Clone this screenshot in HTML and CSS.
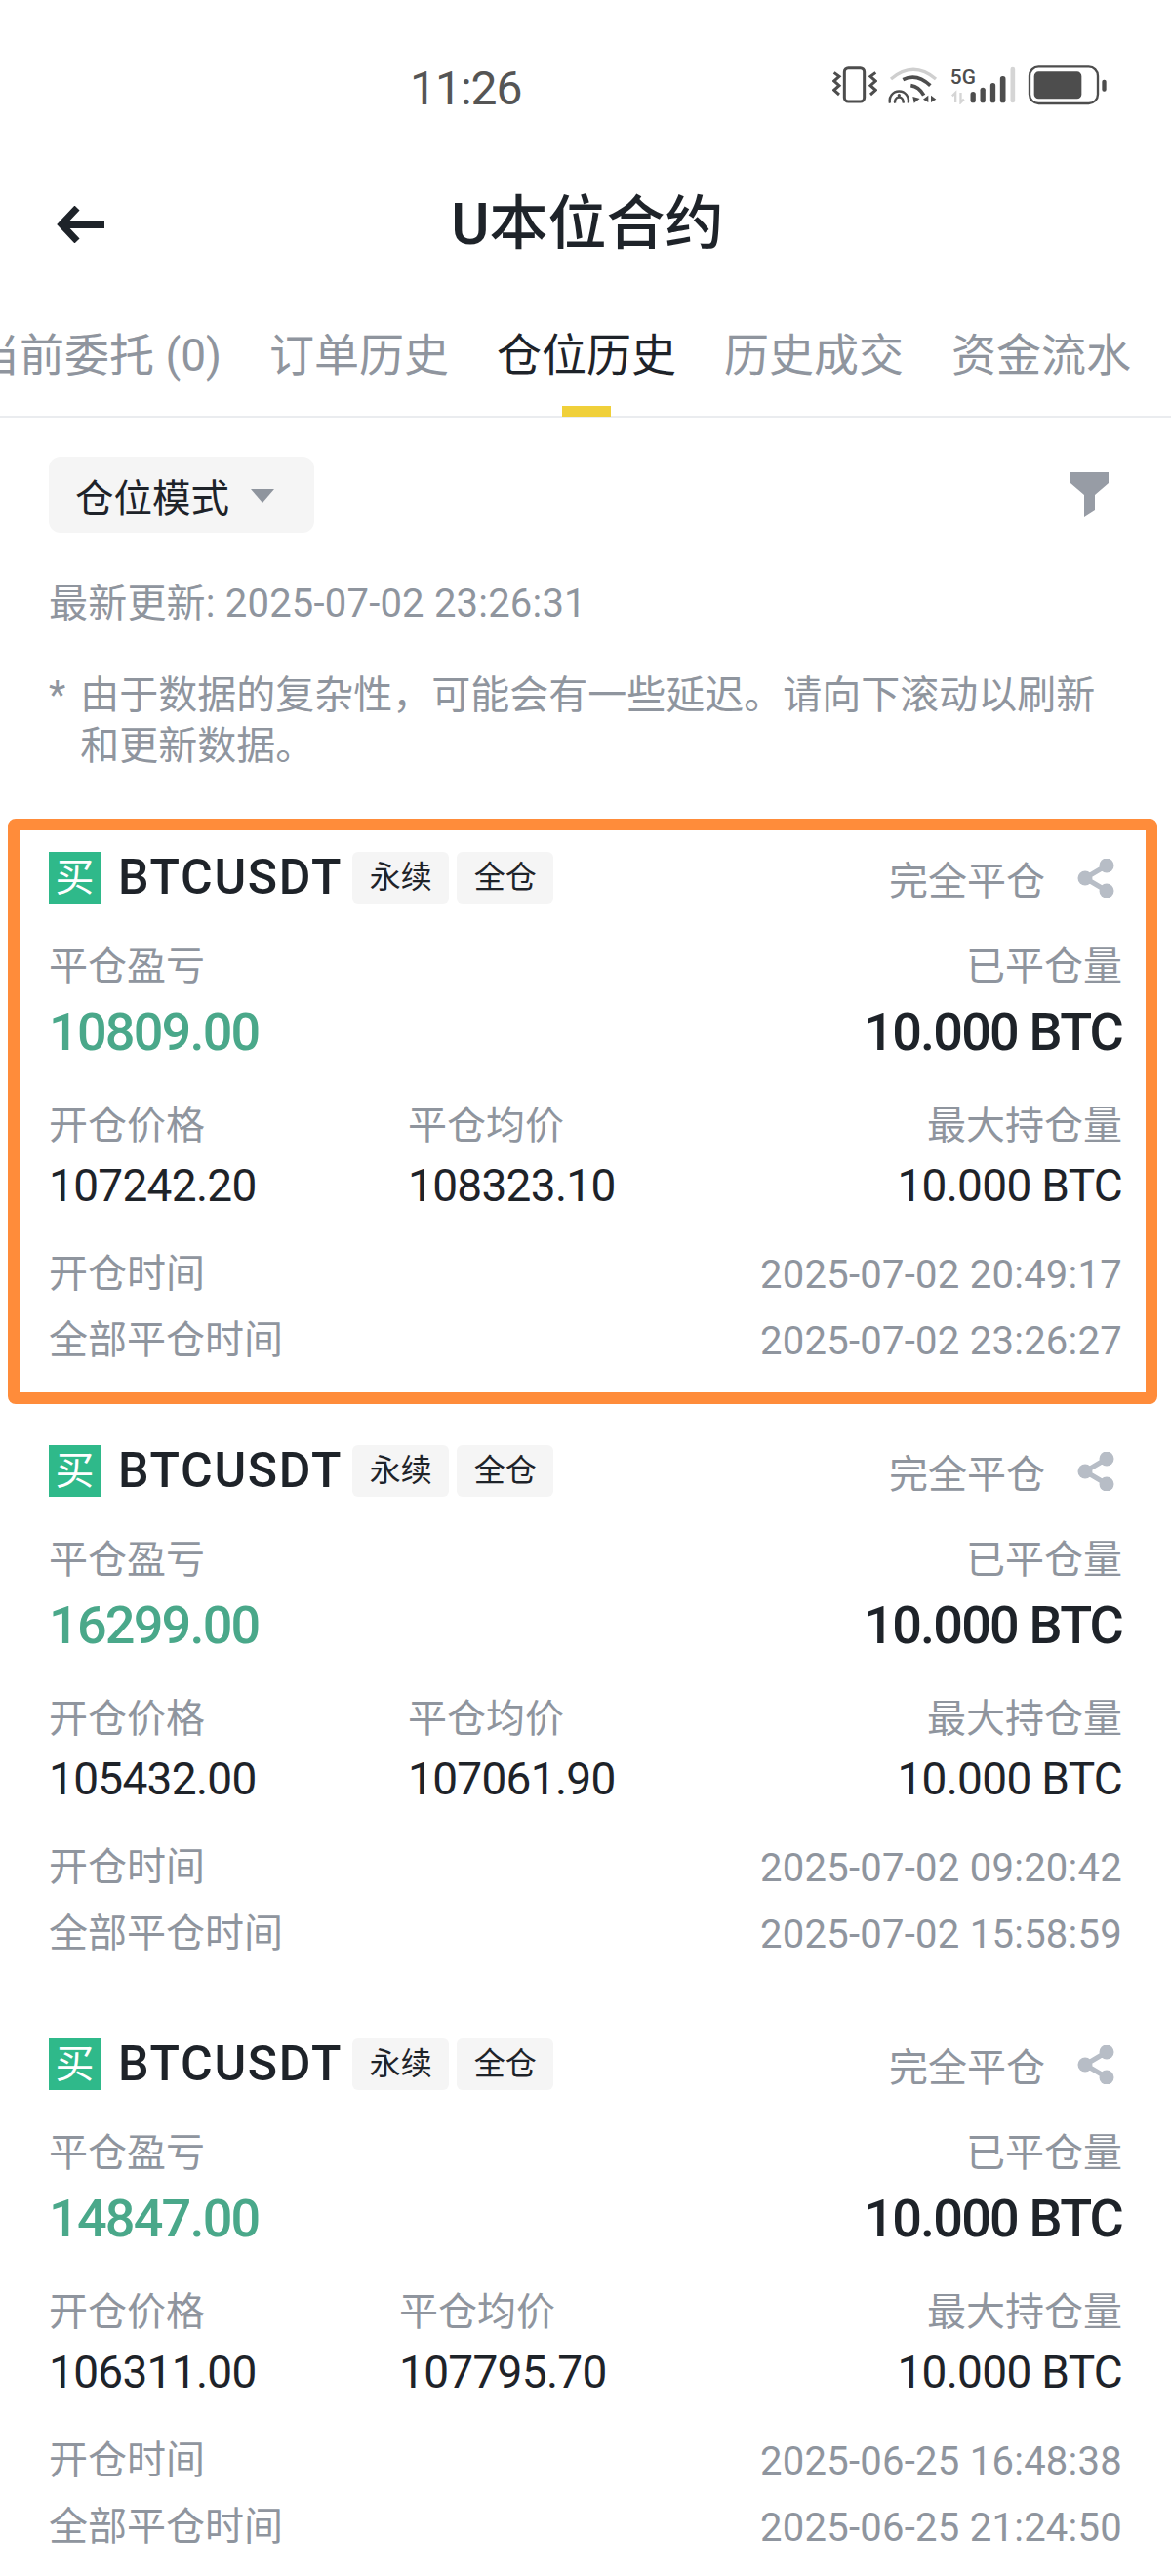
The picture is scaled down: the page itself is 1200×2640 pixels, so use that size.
FILE: index.html
```html
<!DOCTYPE html>
<html lang="zh-CN">
<head>
    <meta charset="UTF-8">
    <meta name="viewport" content="width=device-width, initial-scale=1.0">
    <title>U本位合约</title>
    <link rel="stylesheet" href="styles.css">
</head>
<body>
    <svg class="icon-defs" width="0" height="0">
        <symbol id="share" viewBox="0 0 40 40">
            <path d="M30 7 L8 20 L30 33" fill="none" stroke="#b7bdc6" stroke-width="5"/>
            <circle cx="30" cy="7" r="7.5" fill="#b7bdc6"/>
            <circle cx="8" cy="20" r="7.5" fill="#b7bdc6"/>
            <circle cx="30" cy="33" r="7.5" fill="#b7bdc6"/>
        </symbol>
    </svg>

    <div class="status-bar">
        <span class="clock">11:26</span>
        <div class="status-icons">
            <svg width="46" height="40" viewBox="221 84 138 120">
                <rect x="258" y="92" width="61" height="103" rx="12" fill="none" stroke="#4d4d4d" stroke-width="9"/>
                <path d="M226 106 L242 118 L226 132 L242 146 L226 160 L242 174" fill="none" stroke="#4d4d4d" stroke-width="9"/>
                <path d="M354 106 L338 118 L354 132 L338 146 L354 160 L338 174" fill="none" stroke="#4d4d4d" stroke-width="9"/>
            </svg>
            <svg width="52" height="40" viewBox="392 84 156 120">
                <path d="M401 126 Q470 68 539 126" fill="none" stroke="#cfcfcf" stroke-width="10"/>
                <path d="M438 128 Q480 106 522 146" fill="none" stroke="#4d4d4d" stroke-width="11"/>
                <path d="M462 146 Q488 150 502 176" fill="none" stroke="#4d4d4d" stroke-width="11"/>
                <path d="M398 200 A29 29 0 1 1 454 200" fill="none" stroke="#4d4d4d" stroke-width="7"/>
                <path d="M414 200 A13 13 0 1 1 438 200" fill="none" stroke="#4d4d4d" stroke-width="7"/>
                <circle cx="426" cy="176" r="5" fill="#4d4d4d"/>
                <path d="M468 180 L490 186 L472 200 Z M516 176 V198 L500 188 Z M524 176 V198 L540 188 Z" fill="#4d4d4d"/>
            </svg>
            <svg width="69" height="40" viewBox="578 84 206 120">
                <text class="net-label" x="580" y="142" textLength="78" lengthAdjust="spacingAndGlyphs">5G</text>
                <path d="M596 198 V168 L586 178 M612 168 V198 L622 188" fill="none" stroke="#d5d5d5" stroke-width="7"/>
                <rect x="642" y="165" width="16" height="34" rx="8" fill="#4d4d4d"/>
                <rect x="672" y="152" width="16" height="47" rx="8" fill="#4d4d4d"/>
                <rect x="703" y="138" width="16" height="61" rx="8" fill="#4d4d4d"/>
                <rect x="733" y="117" width="17" height="82" rx="8" fill="#4d4d4d"/>
                <rect x="765" y="89" width="14" height="110" rx="7" fill="#d5d5d5"/>
            </svg>
            <svg width="82" height="42" viewBox="820 80 246 126">
                <rect x="826" y="87" width="210" height="113" rx="28" fill="none" stroke="#4d4d4d" stroke-width="7"/>
                <rect x="840" y="102" width="146" height="84" rx="14" fill="#4d4d4d"/>
                <rect x="1049" y="127" width="13" height="36" rx="6" fill="#4d4d4d"/>
            </svg>
        </div>
    </div>

    <div class="nav-bar">
        <svg class="back" width="50" height="38" viewBox="0 0 50 38">
            <path d="M22 2 L6 19 L22 36" fill="none" stroke="#1e2329" stroke-width="7"/>
            <path d="M9 19 H50" fill="none" stroke="#1e2329" stroke-width="8"/>
        </svg>
        <h1>U本位合约</h1>
    </div>

    <div class="tabs">
        <span class="tab">当前委托 (0)</span>
        <span class="tab">订单历史</span>
        <span class="tab active">仓位历史</span>
        <span class="tab">历史成交</span>
        <span class="tab">资金流水</span>
    </div>

    <div class="toolbar">
        <div class="mode-btn">仓位模式<i class="caret"></i></div>
        <svg width="40" height="47" viewBox="0 0 40 47">
            <path d="M0 0 H39 V11 L25 23 V39 L14 46 V23 L0 11 Z" fill="#979ca5"/>
        </svg>
    </div>

    <p class="updated">最新更新: 2025-07-02 23:26:31</p>
    <p class="notice"><span class="star">*</span><span>由于数据的复杂性，可能会有一些延迟。请向下滚动以刷新和更新数据。</span></p>

    <!-- 第一条带橙色高亮框 -->
    <div class="record highlight">
        <div class="record-head">
            <span class="side">买</span>
            <span class="symbol">BTCUSDT</span>
            <span class="tag">永续</span>
            <span class="tag">全仓</span>
            <span class="state">完全平仓</span>
            <svg class="share" width="40" height="40"><use href="#share"/></svg>
        </div>
        <div class="pnl-row">
            <div>
                <div class="label">平仓盈亏</div>
                <div class="big green">10809.00</div>
            </div>
            <div class="right">
                <div class="label">已平仓量</div>
                <div class="big">10.000 BTC</div>
            </div>
        </div>
        <div class="price-row">
            <div>
                <div class="label">开仓价格</div>
                <div class="price">107242.20</div>
            </div>
            <div>
                <div class="label">平仓均价</div>
                <div class="price">108323.10</div>
            </div>
            <div class="right">
                <div class="label">最大持仓量</div>
                <div class="price">10.000 BTC</div>
            </div>
        </div>
        <div class="time-row"><span class="label">开仓时间</span><span class="time">2025-07-02 20:49:17</span></div>
        <div class="time-row"><span class="label">全部平仓时间</span><span class="time">2025-07-02 23:26:27</span></div>
    </div>

    <div class="record">
        <div class="record-head">
            <span class="side">买</span>
            <span class="symbol">BTCUSDT</span>
            <span class="tag">永续</span>
            <span class="tag">全仓</span>
            <span class="state">完全平仓</span>
            <svg class="share" width="40" height="40"><use href="#share"/></svg>
        </div>
        <div class="pnl-row">
            <div>
                <div class="label">平仓盈亏</div>
                <div class="big green">16299.00</div>
            </div>
            <div class="right">
                <div class="label">已平仓量</div>
                <div class="big">10.000 BTC</div>
            </div>
        </div>
        <div class="price-row">
            <div>
                <div class="label">开仓价格</div>
                <div class="price">105432.00</div>
            </div>
            <div>
                <div class="label">平仓均价</div>
                <div class="price">107061.90</div>
            </div>
            <div class="right">
                <div class="label">最大持仓量</div>
                <div class="price">10.000 BTC</div>
            </div>
        </div>
        <div class="time-row"><span class="label">开仓时间</span><span class="time">2025-07-02 09:20:42</span></div>
        <div class="time-row"><span class="label">全部平仓时间</span><span class="time">2025-07-02 15:58:59</span></div>
    </div>

    <div class="record">
        <div class="record-head">
            <span class="side">买</span>
            <span class="symbol">BTCUSDT</span>
            <span class="tag">永续</span>
            <span class="tag">全仓</span>
            <span class="state">完全平仓</span>
            <svg class="share" width="40" height="40"><use href="#share"/></svg>
        </div>
        <div class="pnl-row">
            <div>
                <div class="label">平仓盈亏</div>
                <div class="big green">14847.00</div>
            </div>
            <div class="right">
                <div class="label">已平仓量</div>
                <div class="big">10.000 BTC</div>
            </div>
        </div>
        <div class="price-row narrow">
            <div>
                <div class="label">开仓价格</div>
                <div class="price">106311.00</div>
            </div>
            <div>
                <div class="label">平仓均价</div>
                <div class="price">107795.70</div>
            </div>
            <div class="right">
                <div class="label">最大持仓量</div>
                <div class="price">10.000 BTC</div>
            </div>
        </div>
        <div class="time-row"><span class="label">开仓时间</span><span class="time">2025-06-25 16:48:38</span></div>
        <div class="time-row"><span class="label">全部平仓时间</span><span class="time">2025-06-25 21:24:50</span></div>
    </div>
</body>
</html>
```

FILE: styles.css
```css
body {
    margin: 0;
    width: 1200px;
    height: 2640px;
    overflow: hidden;
    background: #fff;
    color: #1e2329;
    font-family: Roboto, "Noto Sans CJK SC", sans-serif;
}
.icon-defs {
    position: absolute;
}
.status-bar {
    display: flex;
    align-items: center;
    height: 60px;
    padding: 60px 65px 50px 420px;
}
.clock {
    font-size: 48px;
    color: #555;
    letter-spacing: -1px;
}
.status-icons {
    display: flex;
    align-items: center;
    gap: 11px;
    margin-left: auto;
    margin-top: -6px;
}
.net-label {
    font-size: 62px;
    font-weight: 500;
    fill: #4d4d4d;
}
.nav-bar {
    display: grid;
    grid-template-columns: 1fr auto 1fr;
    align-items: center;
    height: 120px;
}
.back {
    margin-left: 57px;
}
.nav-bar h1 {
    margin: 0 0 0 4px;
    font-size: 60px;
    font-weight: 500;
    line-height: 70px;
}
.tabs {
    display: flex;
    gap: 49px;
    height: 136px;
    margin-left: -26px;
    border-bottom: 2px solid #eaecef;
    white-space: nowrap;
}
.tab {
    position: relative;
    font-size: 46px;
    line-height: 60px;
    padding-top: 44px;
    color: #8f959e;
}
.tab.active {
    color: #1e2329;
}
.tab.active::after {
    content: "";
    position: absolute;
    left: 67px;
    bottom: -1px;
    width: 50px;
    height: 11px;
    background: #f0d03a;
}
.toolbar {
    display: flex;
    justify-content: space-between;
    align-items: center;
    height: 78px;
    margin-top: 40px;
    padding: 0 63px 0 50px;
}
.mode-btn {
    display: flex;
    align-items: center;
    height: 78px;
    padding: 0 41px 0 27px;
    border-radius: 12px;
    background: #f5f5f5;
    font-size: 39.5px;
}
.caret {
    width: 0;
    height: 0;
    margin-left: 22px;
    margin-top: 2px;
    border-left: 12px solid transparent;
    border-right: 12px solid transparent;
    border-top: 14px solid #8f959e;
}
.updated {
    margin: 48px 50px 0;
    font-size: 40px;
    line-height: 50px;
    letter-spacing: 0.2px;
    color: #8f959e;
}
.notice {
    display: flex;
    gap: 15px;
    margin: 43px 70px 0 50px;
    font-size: 40px;
    line-height: 52px;
    color: #8f959e;
}
.star {
    flex: none;
}
.record {
    position: relative;
    box-sizing: border-box;
    height: 608px;
    margin: 0 50px;
    padding-top: 47px;
    border-top: 1px solid #eaecef;
}
.notice + .record {
    margin-top: 34px;
    border-top-color: transparent;
}
/* 高亮框盖在内容上面 */
.highlight {
    z-index: 1;
}
.highlight::after {
    content: "";
    position: absolute;
    left: -42px;
    top: 13px;
    width: 1154px;
    height: 576px;
    border: 12px solid #ff8c3a;
    border-radius: 8px;
}
.record-head {
    display: flex;
    align-items: center;
    height: 53px;
}
.side {
    width: 53px;
    height: 53px;
    margin-right: 18px;
    background: #2fb98a;
    color: #fff;
    font-size: 40px;
    line-height: 53px;
    text-align: center;
}
.symbol {
    margin-right: 10px;
    font-size: 50px;
    font-weight: 500;
    line-height: 53px;
    letter-spacing: 1.7px;
}
.tag {
    width: 99px;
    height: 53px;
    margin-right: 8px;
    border-radius: 6px;
    background: #f5f5f5;
    font-size: 32px;
    line-height: 53px;
    text-align: center;
}
.state {
    margin-left: auto;
    margin-right: 33px;
    font-size: 40px;
    color: #8f959e;
}
.share {
    margin-right: 6px;
}
.label {
    font-size: 40px;
    line-height: 50px;
    color: #8f959e;
}
.right {
    text-align: right;
}
.pnl-row {
    display: flex;
    justify-content: space-between;
    margin-top: 40px;
}
.big {
    margin-top: 11px;
    font-size: 54px;
    font-weight: 500;
    line-height: 62px;
    letter-spacing: -1.8px;
}
.green {
    color: #4aa88a;
}
.price-row {
    display: grid;
    grid-template-columns: 368px 1fr auto;
    margin-top: 40px;
}
.price-row.narrow {
    grid-template-columns: 359px 1fr auto;
}
.price {
    margin-top: 10px;
    font-size: 46px;
    line-height: 52px;
    letter-spacing: -0.7px;
}
.time-row {
    display: flex;
    justify-content: space-between;
    align-items: center;
    height: 68px;
}
.price-row + .time-row {
    margin-top: 31px;
}
.time {
    font-size: 40px;
    color: #8f959e;
    letter-spacing: 0.25px;
}
```
